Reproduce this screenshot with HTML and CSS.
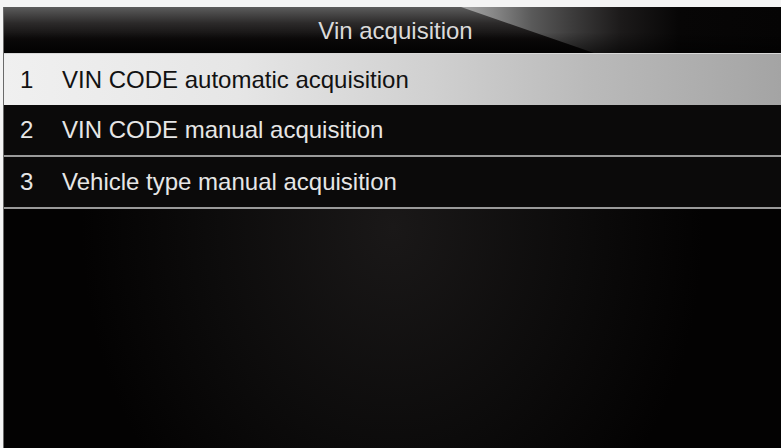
FILE: index.html
```html
<!DOCTYPE html>
<html>
<head>
<meta charset="utf-8">
<link rel="stylesheet" href="styles.css">
</head>
<body>
<div class="screen">
  <div class="header"><span class="title">Vin acquisition</span></div>
  <div class="row selected"><span class="num">1</span><span class="label">VIN CODE automatic acquisition</span></div>
  <div class="row"><span class="num">2</span><span class="label">VIN CODE manual acquisition</span></div>
  <div class="row"><span class="num">3</span><span class="label">Vehicle type manual acquisition</span></div>
  <div class="empty"></div>
</div>
</body>
</html>
```

FILE: styles.css
```css
html, body {
  margin: 0;
  padding: 0;
  background: #f4f4f4;
  width: 781px;
  height: 448px;
  overflow: hidden;
}
.screen {
  margin: 7px 0 0 3px;
  height: 441px;
  display: flex;
  flex-direction: column;
  background: radial-gradient(ellipse 40% 85% at 50% 50%, #1a1818 0%, #0c0b0b 60%, #030202 100%);
  font-family: "Liberation Sans", Arial, sans-serif;
  border-left: 1px solid #6a6a6a;
}
.header {
  position: relative;
  height: 46px;
  flex: none;
  display: flex;
  align-items: center;
  justify-content: center;
  background: linear-gradient(to bottom, #5c5c5c 0%, #2c2a2a 35%, #0c0a0a 70%, #050404 100%);
  overflow: hidden;
}
.header::after {
  content: "";
  position: absolute;
  top: 0;
  bottom: 0;
  left: 457px;
  right: 0;
  clip-path: polygon(0 0, 100% 0, 100% 100%, 133px 100%);
  background: linear-gradient(to right, #a8a8a8 0%, #888 10%, #5a5a5a 22%, #3c3b3b 35%, #1c1a1a 50%, #070606 68%, #050404 100%);
}
.header::before {
  content: "";
  position: absolute;
  top: 0; bottom: 0; left: 0; right: 0;
  background: linear-gradient(to bottom, rgba(0,0,0,0) 0%, rgba(0,0,0,0) 55%, rgba(0,0,0,0.55) 100%);
  z-index: 1;
  pointer-events: none;
}
.title {
  position: relative;
  z-index: 2;
  color: #dadada;
  font-size: 24px;
  margin-left: 6px;
  margin-top: 2px;
}
.row {
  flex: none;
  height: 50px;
  display: flex;
  align-items: center;
  border-bottom: 2px solid #9a9a9a;
  color: #e6e6e6;
  font-size: 24px;
  background: #0b0a0a;
}
.row .num {
  width: 24px;
  padding-left: 16px;
}
.row .label {
  padding-left: 18px;
}
.row.selected {
  height: 51px;
  border-top: 1px solid #d8d8d8;
  border-bottom: none;
  color: #121212;
  background: linear-gradient(to right, #f0f0f0 0%, #e6e6e6 30%, #d0d0d0 55%, #bababa 75%, #a4a4a4 100%);
}
.empty {
  flex: 1;
}
```
